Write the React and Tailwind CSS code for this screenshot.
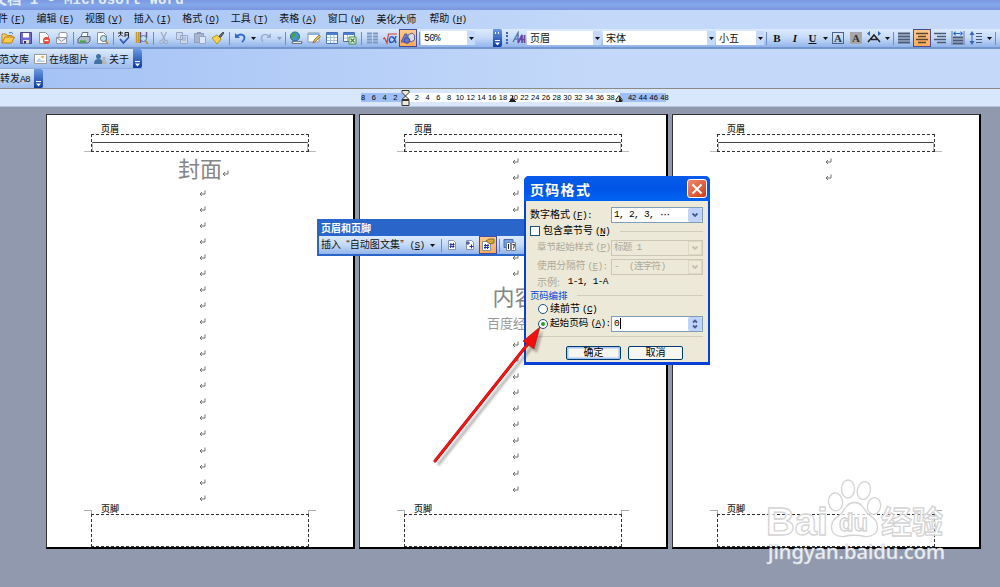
const Caret = ({ className = "" }) => (
  <span className={`flex w-[8px] shrink-0 items-center justify-center ${className}`}>
    <svg width="5" height="3" viewBox="0 0 5 3">
      <path d="M0 0h5L2.5 3z" fill="currentColor" />
    </svg>
  </span>
);

const Sep = () => (
  <span className="flex h-full w-[4px] shrink-0 items-center justify-center">
    <span className="h-[13px] w-px bg-[#6a8ccb]" />
  </span>
);

// accelerator, e.g. (F)
const Key = ({ k, end = "" }) => (
  <span className="ml-[2px] font-['Liberation_Mono',monospace] text-[9.5px] tracking-[-0.7px]">
    (<u className="underline-offset-1">{k}</u>){end}
  </span>
);

const Icon = ({ children, active }) => (
  <span
    className={`flex h-[18px] w-[18px] shrink-0 items-center justify-center ${
      active ? "border border-[#4b4a9c] bg-linear-to-b from-[#ffc98a] to-[#ffab57]" : ""
    }`}
  >
    <svg width="14" height="14" viewBox="0 0 14 14" fill="none" className="shrink-0">
      {children}
    </svg>
  </span>
);

const page = <path d="M2.5 1.5h6l3 3v8h-9z" fill="#fff" stroke="#8a93a8" />;

const Lens = () => (
  <>
    <circle cx="8.5" cy="7.5" r="3" fill="#bfe3ee" stroke="#55708c" />
    <path d="M10.5 10l2.5 3" stroke="#b8892c" strokeWidth="1.6" />
  </>
);

const menus = [
  ["文件", "F"],
  ["编辑", "E"],
  ["视图", "V"],
  ["插入", "I"],
  ["格式", "O"],
  ["工具", "T"],
  ["表格", "A"],
  ["窗口", "W"],
  ["美化大师", null],
  ["帮助", "H"],
];

const rulerMarks = [
  8, 6, 4, 2, "", 2, 4, 6, 8, 10, 12, 14, 16, 18, 20, 22, 24, 26, 28, 30, 32, 34, 36, 38, "", 42, 44, 46, 48,
];

function Combo({ text, className }) {
  return (
    <div className={`flex h-[14px] shrink-0 items-center bg-white pl-[3px] ${className}`}>
      <span className="flex-1 whitespace-nowrap text-[10px] leading-[14px]">{text}</span>
      <Caret className="h-[14px] bg-[#c5dafa]" />
    </div>
  );
}

function Overflow({ dots }) {
  return (
    <span className="flex h-full w-[9px] shrink-0 flex-col items-center justify-end rounded-r-[2px] bg-linear-to-b from-[#6d99e2] to-[#0a3c9c] pb-[1px] text-white">
      <svg width="7" height="15" viewBox="0 0 7 15">
        {dots && <path d="M1 1l1 1-1 1M4 1l1 1-1 1" stroke="#fff" fill="none" />}
        <path d="M1 9.5h5" stroke="#fff" />
        <path d="M1 11.5h5l-2.5 3z" fill="#fff" />
      </svg>
    </span>
  );
}

function StandardBar() {
  return (
    <div className="flex h-[20px] shrink-0 items-center border-b-2 border-[#7396cf] bg-linear-to-b from-[#dceafe] via-[#c4d9f8] to-[#93b4ea]">
      <div className="-ml-px flex h-full w-[494px] shrink-0 items-center">
        <Icon>
          <path d="M1 12V3h4l1 1.500h5V6" fill="#f6d06a" stroke="#b98a25" />
          <path d="M1 12l3-6h9.500l-3 6z" fill="#ffc94a" stroke="#b87f14" />
          <path d="M8 2q3-2 4 1" stroke="#5b78b0" />
        </Icon>
        <Icon>
          <path d="M1.500 1.500h11v11h-11z" fill="#6d69d0" stroke="#4644a0" />
          <path d="M4 2h6v4.500H4z" fill="#fff" />
          <path d="M4 9h6v3.500H4z" fill="#ddd" />
          <path d="M5 10h2v2.500H5z" fill="#333" />
        </Icon>
        <Icon>
          {page}
          <circle cx="9.500" cy="9.500" r="3.500" fill="#e2482d" />
          <path d="M7.500 9.500h4" stroke="#fff" strokeWidth="1.400" />
        </Icon>
        <Icon>
          <path d="M4 6V3q0-1.500 1.500-1.500h5Q12 1.500 12 3v4" fill="#fff" stroke="#8c94a6" />
          <path d="M1.500 6.500h10v6h-10z" fill="#eceef3" stroke="#8c94a6" />
          <path d="M1.500 6.500l5 4 5-4" stroke="#8c94a6" />
        </Icon>
        <Sep />
        <Icon>
          <path d="M4 6l1.500-4.500H11L10 6z" fill="#fff" stroke="#68748a" />
          <path d="M1 8l2.500-2.500H13V10l-2 2H1z" fill="#b3bcc9" stroke="#58647a" />
          <path d="M3 9.500h6v2H3z" fill="#40a644" />
        </Icon>
        <Icon>
          {page}
          <Lens />
        </Icon>
        <Sep />
        <Icon>
          <path d="M1 2h5M3.500 0.500v3M1.500 5.500L4 3.500l2 2M8 6V1.500h3.500V6M8 4h3.500" stroke="#222" />
          <path d="M3 8l3.500 4L12 6" stroke="#2f57b5" strokeWidth="1.800" />
        </Icon>
        <Icon>
          <path d="M1.500 1v11M3.500 1v11" stroke="#c59b2d" strokeWidth="1.500" />
          <path d="M5.500 1v11M11.500 1v6" stroke="#6b4fa8" strokeWidth="1.500" />
          <Lens />
        </Icon>
        <Sep />
        <Icon>
          <path d="M4 1l4 8M9.500 1l-4 8" stroke="#9fabc4" strokeWidth="1.300" />
          <circle cx="4.500" cy="11" r="1.800" stroke="#9fabc4" />
          <circle cx="9" cy="11" r="1.800" stroke="#9fabc4" />
        </Icon>
        <Icon>
          <path d="M1.500 1.500h6v7h-6zM5.500 4.500h7v8h-7z" fill="#ccd8ee" stroke="#98a6c4" />
          <path d="M7 7h4M7 9h4" stroke="#98a6c4" />
        </Icon>
        <Icon>
          <path d="M1.500 2.500h9v9h-9z" fill="#a9b5cf" stroke="#909db8" />
          <path d="M6.500 5.500h6v7h-6z" fill="#dce5f5" stroke="#98a6c4" />
          <path d="M4 1h4v2H4z" fill="#8e9ab5" />
        </Icon>
        <Icon>
          <path d="M8 5l4-4 1 1-3.500 4.500z" fill="#666" stroke="#555" />
          <path d="M1 7l5-3 4 4-4 5z" fill="#f3d44a" stroke="#b8922a" />
        </Icon>
        <Sep />
        <Icon>
          <path d="M2 2v5h5z" fill="#2f66cf" />
          <path d="M4 5q4-3 7 0 1.500 3-2 6" stroke="#2f66cf" strokeWidth="1.800" />
        </Icon>
        <Caret />
        <Icon>
          <path d="M12 2v5H7z" fill="#9dadce" />
          <path d="M10 5q-4-3-7 0-1.500 3 1 6" stroke="#9dadce" strokeWidth="1.600" />
        </Icon>
        <Caret className="text-[#8a98b8]" />
        <Sep />
        <Icon>
          <circle cx="6" cy="5.500" r="4.500" fill="#4595da" stroke="#28608f" />
          <path d="M2 4q3-4 5-2l-1 3-3 3zM7 6l3-1-1 4z" fill="#42a545" />
          <path d="M4 11.500h3M9 11.500h3" stroke="#6a7484" strokeWidth="3" strokeLinecap="round" />
          <path d="M4 11.500h8" stroke="#eee" />
        </Icon>
        <Icon>
          <path d="M1 2h11v9H1z" fill="#fff" stroke="#8d97a8" />
          <path d="M1 2h11v2H1z" fill="#8bb0e5" />
          <path d="M6 12l1-3 5-5 1.500 1.500-5 5z" fill="#e9b74c" stroke="#80622b" strokeWidth=".7" />
        </Icon>
        <Icon>
          <path d="M1.500 1.500h11v11h-11z" fill="#fff" stroke="#4671b9" />
          <path d="M2 2h10v2H2z" fill="#4a7fd4" />
          <path d="M5.500 4v8M9 4v8M2 6.500h10M2 9.500h10" stroke="#a7bddd" />
        </Icon>
        <Icon>
          <path d="M.5 1.500h11v9H.5z" fill="#fff" stroke="#4671b9" />
          <path d="M1 2h10v2H1z" fill="#4a7fd4" />
          <path d="M4.500 4v6M1 7h10" stroke="#a7bddd" />
          <path d="M6 6h7v7H6z" fill="#fff" stroke="#38883d" />
          <path d="M7.500 7.500l4 4M11.500 7.500l-4 4" stroke="#38883d" strokeWidth="1.300" />
        </Icon>
        <Sep />
        <Icon>
          <path d="M2 2.500h5M2 5.500h5M2 8.500h5M2 11.500h5M8 2.500h5M8 5.500h5M8 8.500h5M8 11.500h5" stroke="#7d96c2" strokeWidth="2" />
        </Icon>
        <Icon>
          <path d="M0 8l1.500-1L4 12 5.500 3H14" stroke="#d5412e" strokeWidth="1.200" />
          <path d="M13 5q-2 7-5 6.500Q6 11 6.500 8q1-3 3-2t3.500 6" stroke="#2659b8" strokeWidth="1.400" />
        </Icon>
        <Icon active>
          <path d="M0 11l4-8h2v8z" fill="#7781ce" stroke="#5157a8" />
          <path d="M7 4l4-2 2.500 2v5L10 11 7 9z" fill="#d9d9de" stroke="#5e6586" />
          <circle cx="6" cy="9.500" r="2.800" fill="#6377cb" stroke="#3f4b99" />
        </Icon>
        <Sep />
        <Combo text={<span className="font-['Liberation_Mono',monospace] text-[10px] tracking-[-0.7px]">50%</span>} className="w-[54px]" />
      </div>
      <Overflow dots />
      <div className="ml-[2px] flex h-full flex-1 items-center">
        <span className="mx-[2px] h-[12px] border-l-2 border-dotted border-[#3d63ab]" />
        <Icon>
          <path d="M1 11L6 2v9M3 8h3" stroke="#5379bd" strokeWidth="1.500" />
          <path d="M6 12L10 4v8M12.500 4v8M8 8.500h5" stroke="#68459e" strokeWidth="1.700" />
        </Icon>
        <Combo text="页眉" className="ml-[-1px] w-[74px]" />
        <Combo text="宋体" className="ml-[2px] w-[112px]" />
        <Combo text="小五" className="ml-[1px] w-[48px]" />
        <Sep />
        <div className="flex items-center font-['Liberation_Serif',serif] text-[11px] font-bold leading-none">
          <span className="w-[18px] text-center">B</span>
          <span className="w-[18px] text-center italic">I</span>
          <span className="w-[17px] text-center underline">U</span>
          <Caret />
        </div>
        <div className="flex items-center font-['Liberation_Serif',serif] text-[11px] font-bold leading-[12px] text-[#333]">
          <span className="mx-[3px] w-[12px] border border-[#4c6489] text-center leading-[10px]">A</span>
          <span className="mx-[3px] w-[12px] bg-[#a6a6a8] text-center">A</span>
        </div>
        <Icon>
          <path d="M1 11l6-7 6 7M4 8.500h6" stroke="#222" strokeWidth="1.500" />
          <path d="M0 2.500L3 0v5zM14 2.500L11 0v5z" fill="#2464d4" />
        </Icon>
        <Caret />
        <Sep />
        <Icon>
          <path d="M1 2.500h12M1 5.500h12M1 8.500h12M1 11.500h12" stroke="#4c5b73" strokeWidth="2" />
        </Icon>
        <Icon active>
          <path d="M1 2.500h12M3 5.500h8M1 8.500h12M3 11.500h8" stroke="#5c4631" strokeWidth="1.700" />
        </Icon>
        <Icon>
          <path d="M1 2.500h12M4 5.500h9M1 8.500h12M4 11.500h9" stroke="#4c5b73" strokeWidth="1.500" />
        </Icon>
        <Icon>
          <path d="M1 0v14M13 0v14" stroke="#68799a" />
          <path d="M2 2.500L4.500 0v5zM12 2.500L9.500 0v5zM4 2h6v1H4z" fill="#2464d4" />
          <path d="M2 6.500h10M2 9.500h10M2 12.500h10" stroke="#4c5b73" strokeWidth="2" />
        </Icon>
        <Icon>
          <path d="M3 0l2.500 4h-5zM3 14L.5 10h5zM2.500 4h1v6h-1z" fill="#3564bb" />
          <path d="M7 2.500h6M7 5.500h6M7 8.500h6M7 11.500h6" stroke="#4c5b73" />
        </Icon>
        <Caret />
        <Sep />
      </div>
    </div>
  );
}

function Ruler() {
  return (
    <div className="flex h-[18px] shrink-0 items-center border-b border-[#b6c4dc] bg-[#d8e7fc]">
      <div className="relative ml-[361px] flex h-[9px]">
        <div className="w-[44px] bg-[#9ebef5]" />
        <div className="w-[215px] bg-white" />
        <div className="w-[46px] bg-[#9ebef5]" />
        <div className="absolute left-[-3.400px] top-0 flex h-[9px] font-['Liberation_Sans',sans-serif] text-[7.500px] font-medium leading-[10px] text-black">
          {rulerMarks.map((n, i) => (
            <span key={i} className="w-[10.770px] text-center">
              {n}
            </span>
          ))}
        </div>
        <svg className="absolute left-[40px] top-[-3px]" width="9" height="16" viewBox="0 0 9 16">
          <path d="M1 .5h7v2L4.500 6 8 9.500H1L4.500 6 1 2.500zM1 10.500h7v5H1z" fill="#ece9d8" stroke="#333" />
        </svg>
        <svg className="absolute left-[148px] top-[3px]" width="7" height="6" viewBox="0 0 7 6">
          <path d="M3.500 0v2M0 5.500h7M1 5l2.500-3L6 5z" fill="#222" stroke="#222" />
        </svg>
        <svg className="absolute left-[254px] top-[2px]" width="8" height="7" viewBox="0 0 8 7">
          <path d="M4 .5l3 4v2H1v-2z" fill="#d8d5c6" stroke="#222" />
          <path d="M4 1v5h3" fill="#222" />
        </svg>
      </div>
    </div>
  );
}

const Mark = () => (
  <svg width="7" height="7" viewBox="0 0 7 7" fill="none" className="shrink-0">
    <path d="M6 .5v3.500H1M3 2L1 4l2 2" stroke="#707070" />
  </svg>
);

function Marks({ count }) {
  return Array.from({ length: count }, (_, i) => (
    <div key={i} className="flex h-[16.070px] shrink-0 items-center justify-center pl-[5px] pt-[2px]">
      <Mark />
    </div>
  ));
}

function Page({ children }) {
  return (
    <div className="flex h-[435px] w-[309px] shrink-0 flex-col border-b-2 border-l border-r-2 border-t border-black border-l-[#333] border-t-[#333] bg-white">
      <div className="h-[19px] shrink-0 pl-[54px] pt-[9px] text-[9px] font-medium leading-[10px] text-[#222]">页眉</div>
      <div className="ml-[37px] flex h-[18px] w-[232px] shrink-0 items-end">
        <div className="h-px w-[7px] bg-[#bbb]" />
        <div className="h-full w-[218px] border border-dashed border-[#333] pt-[7px]">
          <div className="h-[9px] border-x border-t border-x-[#bbb] border-t-[#444]" />
        </div>
        <div className="h-px w-[7px] bg-[#bbb]" />
      </div>
      <div className="flex h-[353px] shrink-0 flex-col">{children}</div>
      <div className="flex h-[9px] shrink-0 items-end">
        <div className="ml-[37px] h-[4px] w-[8px] border-r border-t border-[#aaa]" />
        <div className="ml-[9px] flex-1 text-[9px] font-medium leading-[10px] text-[#222]">页脚</div>
        <div className="mr-[37px] h-[4px] w-[8px] border-l border-t border-[#aaa]" />
      </div>
      <div className="ml-[44px] h-[33px] w-[218px] border border-dashed border-[#333]" />
    </div>
  );
}

function HeaderFooterBar() {
  return (
    <div className="absolute left-[317px] top-[219px] h-[37px] w-[215px] border-2 border-[#2a66c9] bg-[#2a66c9]">
      <div className="h-[15px] pl-[2px] text-[10px] font-bold leading-[14px] text-white">页眉和页脚</div>
      <div className="flex h-[18px] items-center bg-linear-to-b from-[#dceafe] via-[#c4d9f8] to-[#93b4ea] pl-[2px] text-[10px]">
        <span className="w-[107px] whitespace-nowrap tracking-[0.1px]">
          插入<span className="ml-[5px] font-['Liberation_Sans',sans-serif]">“</span>自动图文集
          <span className="font-['Liberation_Sans',sans-serif]">”</span>
          <span className="ml-[4px]">
            <Key k="S" />
          </span>
        </span>
        <Caret />
        <span className="w-[3px]" />
        <Sep />
        <Icon>
          <path d="M3.500 2.500h5l2 2v7h-7z" fill="#fff" stroke="#8794b0" />
          <path d="M6 5l-.5 5M8.500 5L8 10M4.500 6.500h5M4.500 8.500h5" stroke="#25319c" />
        </Icon>
        <Icon>
          <path d="M3.500 2.500h5l2 2v7h-7z" fill="#fff" stroke="#8794b0" />
          <path d="M5 3v4M3 5h4M8.500 6.500v4M6.500 8.500h4" stroke="#25319c" />
        </Icon>
        <Icon active>
          <path d="M1.500 3.500h8v9h-8z" fill="#fff" stroke="#8794b0" />
          <path d="M4.500 6L4 11M7 6l-.5 5M3 7.500h5M3 9.500h5" stroke="#25319c" />
          <path d="M5 3l3-2h5v4l-4 1z" fill="#dca832" stroke="#77703c" />
        </Icon>
        <Sep />
        <Icon>
          <path d="M1 1.500h9v8H1z" fill="#73a0e6" stroke="#416ab5" />
          <path d="M3.500 4.500h4v8h-4zM8.500 4.500h4v8h-4z" fill="#fff" stroke="#7484a8" />
          <path d="M5.500 6v5M9.500 6.500h2l-1 4" stroke="#222" />
        </Icon>
      </div>
    </div>
  );
}

function Select({ text, disabled, spin }) {
  return (
    <div
      className={`flex h-[16px] w-[92px] shrink-0 items-center border pl-[2px] ${
        disabled ? "border-[#cbc7b4] bg-[#ece9d8] text-[#aca899]" : "border-[#7f9db9] bg-white text-black"
      }`}
    >
      <span className="flex-1 whitespace-pre font-['Liberation_Mono','Noto_Sans_CJK_SC',monospace] text-[9.500px] tracking-[-0.7px]">
        {text}
      </span>
      <span
        className={`flex h-[14px] w-[14px] items-center justify-center ${
          disabled ? "border border-[#dcd9c9]" : "rounded-[2px] bg-[#c2d3fb]"
        }`}
      >
        <svg width="8" height="10" viewBox="0 0 8 10" fill="none" stroke={disabled ? "#c5c1b0" : "#42608f"} strokeWidth="1.800">
          {spin ? <path d="M2 3.500l2-2 2 2M2 6.500l2 2 2-2" /> : <path d="M1.500 3.500L4 6l2.500-2.500" />}
        </svg>
      </span>
    </div>
  );
}

const Rule = () => <span className="h-px flex-1 bg-[#d0cdbf]" />;

function PageNumberDialog() {
  return (
    <div className="absolute left-[524px] top-[176px] flex h-[189px] w-[186px] flex-col overflow-hidden rounded-t-[5px] bg-[#0a40d8] px-[2px] pb-[3px] text-[10px] text-black">
      <div className="-mx-[2px] flex h-[25px] shrink-0 items-center justify-between bg-linear-to-b from-[#0a5bea] via-[#0055e5] to-[#0063f5] pl-[6px] pr-[3px]">
        <span className="text-[14px] font-bold leading-none tracking-[1.300px] text-white">页码格式</span>
        <span className="flex h-[19px] w-[20px] items-center justify-center rounded-[3px] border border-white bg-linear-to-br from-[#ee8a6c] to-[#cf3a10]">
          <svg width="12" height="12" viewBox="0 0 12 12">
            <path d="M1.500 1.500l9 9M10.500 1.500l-9 9" stroke="#fff" strokeWidth="2" />
          </svg>
        </span>
      </div>
      <div className="flex flex-1 flex-col bg-[#ece9d8] pl-[4px] pr-[5px] pt-[6px] leading-none">
        <div className="flex h-[16px] items-center justify-between">
          <span className="min-w-0 whitespace-nowrap">
            数字格式
            <Key k="F" end=":" />
          </span>
          <Select
            text={
              <>
                1, 2, 3, <span className="tracking-[-2.500px]">···</span>
              </>
            }
          />
        </div>
        <div className="flex h-[16px] items-center gap-[3px]">
          <span className="h-[10px] w-[10px] border border-[#1c5180] bg-white" />
          <span className="whitespace-nowrap">
            包含章节号
            <Key k="N" />
          </span>
          <span className="w-[4px]" />
          <Rule />
        </div>
        <div className="flex h-[17px] items-center justify-between pl-[7px] text-[#aca899]">
          <span className="min-w-0 whitespace-nowrap text-[9.500px] tracking-[-0.1px]">
            章节起始样式
            <Key k="P" />
          </span>
          <Select text="标题 1" disabled />
        </div>
        <div className="mt-[2px] flex h-[17px] items-center justify-between pl-[7px] text-[#aca899]">
          <span className="min-w-0 whitespace-nowrap text-[9.700px]">
            使用分隔符
            <Key k="E" end=":" />
          </span>
          <Select text="-  (连字符)" disabled />
        </div>
        <div className="flex h-[14px] items-center pl-[7px]">
          <span className="text-[#aca899]">示例:</span>
          <span className="ml-[8px] whitespace-pre font-['Liberation_Mono',monospace] text-[9.500px] tracking-[-0.7px]">1-1, 1-A</span>
        </div>
        <div className="flex h-[13px] items-center gap-[10px]">
          <span className="w-[37px] whitespace-nowrap text-[9.500px] tracking-[-0.200px] text-[#0046d5]">页码编排</span>
          <Rule />
        </div>
        <div className="flex h-[13px] items-center gap-[2px] pl-[8px]">
          <span className="h-[10px] w-[10px] rounded-full border border-[#1c5180] bg-white" />
          <span className="whitespace-nowrap">
            续前节
            <Key k="C" />
          </span>
        </div>
        <div className="flex h-[17px] items-center justify-between pl-[8px]">
          <span className="flex min-w-0 items-center gap-[2px] whitespace-nowrap">
            <span className="flex h-[10px] w-[10px] shrink-0 items-center justify-center rounded-full border border-[#1c5180] bg-white">
              <span className="h-[4px] w-[4px] rounded-full bg-[#21a121]" />
            </span>
            <span className="text-[9.600px]">
              起始页码
              <Key k="A" end=":" />
            </span>
          </span>
          <Select
            spin
            text={
              <>
                0<span className="ml-px border-l border-black" />
              </>
            }
          />
        </div>
        <div className="mt-[4px] h-px bg-[#d0cdbf]" />
        <div className="mt-[9px] flex gap-[7px] pl-[36px]">
          <button className="h-[14px] w-[55px] rounded-[2px] border border-[#003c74] bg-[#f7f6f0] pb-[2px] leading-[10px] shadow-[inset_0_0_0_1.5px_#a9c4f2]">
            确定
          </button>
          <button className="h-[14px] w-[55px] rounded-[2px] border border-[#003c74] bg-[#f7f6f0] pb-[2px] leading-[10px]">取消</button>
        </div>
      </div>
    </div>
  );
}

function Watermark() {
  return (
    <svg className="absolute left-[760px] top-[470px]" width="200" height="105" viewBox="0 0 200 105">
      <g fill="#fff" fillOpacity=".7" stroke="#d4d4d4" strokeWidth="1.300">
        <text x="6" y="65" fontFamily="Liberation Sans" fontWeight="bold" fontSize="39" textLength="62" lengthAdjust="spacingAndGlyphs">
          Bai
        </text>
        <ellipse cx="75.500" cy="32" rx="7" ry="9" transform="rotate(-8 75 32)" />
        <ellipse cx="88" cy="19" rx="6.500" ry="9" />
        <ellipse cx="104" cy="20.500" rx="6.500" ry="9" transform="rotate(12 104 20)" />
        <ellipse cx="114" cy="36" rx="6.500" ry="8.500" transform="rotate(10 114 36)" />
        <path d="M94.500 32.500C101 32.500 104 38 107 43C111 47 117.500 49 117.500 57C117.500 64 112 67 105 66.500Q94.500 64 84 66.500C77 67 71.500 64 71.500 57C71.500 49 78 47 82 43C85 38 88 32.500 94.500 32.500z" />
        <text x="79" y="61" fontFamily="Liberation Sans" fontWeight="bold" fontSize="23" textLength="29" lengthAdjust="spacingAndGlyphs">
          du
        </text>
        <text x="121" y="63" fontFamily="Noto Sans CJK SC" fontWeight="bold" fontSize="31">
          经验
        </text>
      </g>
      <text
        x="8"
        y="89"
        fontFamily="Noto Sans"
        fontSize="19"
        fontWeight="500"
        fill="#f1f2f5"
        stroke="#cfd2da"
        strokeWidth=".5"
        textLength="177"
        lengthAdjust="spacingAndGlyphs"
      >
        jingyan.baidu.com
      </text>
    </svg>
  );
}

function Arrow() {
  return (
    <svg className="absolute left-[425px] top-[315px]" width="130" height="160" viewBox="0 0 130 160">
      <g transform="translate(3 4)" opacity=".35" className="blur-[1px]">
        <path d="M10 146L104 28" stroke="#333" strokeWidth="3" />
        <path d="M115 12L98 26l11 8z" fill="#333" />
      </g>
      <path d="M10 146L106 25" stroke="#a30808" strokeWidth="3" strokeLinecap="round" />
      <path d="M10 146L106 25" stroke="#f81414" strokeWidth="2.200" strokeLinecap="round" />
      <path d="M115 12L98 26l11 8z" fill="#f20f0f" stroke="#a31010" strokeWidth=".6" />
    </svg>
  );
}

export default function App() {
  return (
    <div className="relative flex h-[587px] w-[1000px] flex-col overflow-hidden bg-[#9099ae] font-['Noto_Sans_CJK_SC',sans-serif] text-[#111]">
      <div className="h-[10px] shrink-0 overflow-hidden bg-linear-to-b from-[#7c98e2] via-[#84a8e9] to-[#7994de]">
        <div className="-ml-[7px] -mt-[8px] whitespace-pre font-['Liberation_Mono','Noto_Sans_CJK_SC',monospace] text-[14px] font-bold leading-[17px] tracking-[0.150px] text-[#e3ebfb]">
          文档 1 - Microsoft Word
        </div>
      </div>
      <div className="flex h-[79px] shrink-0 flex-col border-b border-[#8b8b86] bg-linear-to-r from-[#a3c1f5] to-[#c4d9f9] to-60%">
        <div className="-ml-[12px] flex h-[19px] shrink-0 items-center pb-px text-[10px] leading-none">
          {menus.map(([label, key]) => (
            <span key={label} className={`shrink-0 whitespace-nowrap ${key ? "w-[48.550px]" : "w-[53px]"}`}>
              {label}
              {key && <Key k={key} />}
            </span>
          ))}
        </div>
        <StandardBar />
        <div className="flex h-[20px] w-[142px] shrink-0 items-center border-b border-[#8dade3] bg-linear-to-b from-[#dceafe] to-[#9dbcee] text-[10px] leading-none">
          <span className="-ml-px w-[35px] whitespace-nowrap">范文库</span>
          <svg width="13" height="12" viewBox="0 0 13 12" className="mr-[2px] shrink-0">
            <path d="M.5 1.500h12v9H.5z" fill="#fff" stroke="#9a9a98" />
            <path d="M2 9l3-4 3 3 2-1 1 2z" fill="#b7cfe4" />
            <circle cx="8.500" cy="4" r="1.300" fill="#efb04b" />
          </svg>
          <span className="w-[45px] whitespace-nowrap">在线图片</span>
          <svg width="13" height="12" viewBox="0 0 13 12" className="mr-[2px] shrink-0">
            <circle cx="4.500" cy="3.500" r="2.500" fill="#42729f" />
            <path d="M0 11q0-5 4.500-5T9 11z" fill="#42729f" />
            <circle cx="10" cy="5.500" r="1.700" fill="#b5b5b2" />
            <path d="M8 11q0-4 2-4t3 4z" fill="#b5b5b2" />
          </svg>
          <span className="flex-1 whitespace-nowrap">关于</span>
          <Overflow />
        </div>
        <div className="flex h-[19px] w-[43px] shrink-0 items-center bg-linear-to-b from-[#dceafe] to-[#9dbcee] text-[10px] leading-none">
          <span className="flex-1 whitespace-nowrap">
            转发<span className="font-['Liberation_Mono',monospace] text-[9.500px] tracking-[-0.7px]">A8</span>
          </span>
          <Overflow />
        </div>
      </div>
      <Ruler />
      <div className="flex gap-[4px] pl-[46px] pt-[7px]">
        <Page>
          <div className="flex h-[32px] shrink-0 items-end justify-center pb-[5px] pl-[7px] text-[22px] leading-[24px] text-[#858585]">
            封面
            <span className="pb-[2px]">
              <Mark />
            </span>
          </div>
          <Marks count={20} />
        </Page>
        <Page>
          <Marks count={8} />
          <div className="flex h-[32px] shrink-0 items-center justify-center pb-[4px] pl-[3px] text-[22px] leading-[24px] text-[#858585]">内容</div>
          <div className="flex h-[23px] shrink-0 items-center justify-center pb-[3px] text-[13px] leading-none text-[#999]">百度经验</div>
          <Marks count={10} />
        </Page>
        <Page>
          <Marks count={2} />
        </Page>
      </div>
      <HeaderFooterBar />
      <PageNumberDialog />
      <Arrow />
      <Watermark />
    </div>
  );
}
